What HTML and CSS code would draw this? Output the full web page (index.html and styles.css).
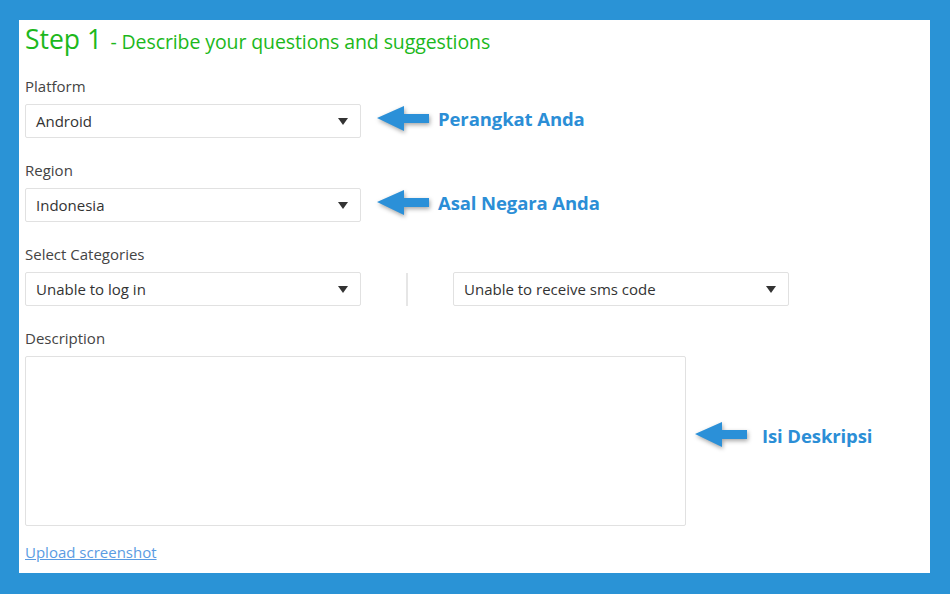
FILE: index.html
```html
<!DOCTYPE html>
<html>
<head>
<meta charset="utf-8">
<link rel="stylesheet" href="styles.css">
</head>
<body>
<div class="frame">
  <div class="panel">
    <h1 class="title"><span class="step">Step 1</span> <span class="sub">- Describe your questions and suggestions</span></h1>

    <div class="field">
      <div class="label">Platform</div>
      <div class="row">
        <div class="select"><span>Android</span><span class="caret"></span></div>
        <div class="note">
          <svg class="arrow" width="58" height="30" viewBox="0 0 58 30"><path d="M2 14 L29 2 L29 10 L54 10 L54 19 L29 19 L29 27 Z" fill="#2b90d8"/></svg>
          <span class="note-text">Perangkat Anda</span>
        </div>
      </div>
    </div>

    <div class="field">
      <div class="label">Region</div>
      <div class="row">
        <div class="select"><span>Indonesia</span><span class="caret"></span></div>
        <div class="note">
          <svg class="arrow" width="58" height="30" viewBox="0 0 58 30"><path d="M2 14 L29 2 L29 10 L54 10 L54 19 L29 19 L29 27 Z" fill="#2b90d8"/></svg>
          <span class="note-text">Asal Negara Anda</span>
        </div>
      </div>
    </div>

    <div class="field">
      <div class="label">Select Categories</div>
      <div class="row">
        <div class="select"><span>Unable to log in</span><span class="caret"></span></div>
        <div class="divider"></div>
        <div class="select"><span>Unable to receive sms code</span><span class="caret"></span></div>
      </div>
    </div>

    <div class="field">
      <div class="label">Description</div>
      <div class="row desc-row">
        <div class="textarea"></div>
        <div class="note note-desc">
          <svg class="arrow" width="58" height="30" viewBox="0 0 58 30"><path d="M2 14 L29 2 L29 10 L54 10 L54 19 L29 19 L29 27 Z" fill="#2b90d8"/></svg>
          <span class="note-text">Isi Deskripsi</span>
        </div>
      </div>
    </div>

    <a class="upload" href="#">Upload screenshot</a>
  </div>
</div>
</body>
</html>
```

FILE: styles.css
```css
html, body {
  margin: 0;
  padding: 0;
}
body {
  background: #2a93d6;
  font-family: "Open Sans", "Noto Sans", sans-serif;
}
.frame {
  width: 950px;
  height: 594px;
  box-sizing: border-box;
  padding: 20px 20px 21px 19px;
}
.panel {
  background: #fff;
  height: 100%;
  box-sizing: border-box;
  padding: 0 6px;
  display: flex;
  flex-direction: column;
}
.title {
  margin: 0;
  padding-top: 0;
  height: 37px;
  line-height: 34px;
  font-weight: normal;
  color: #1cb81c;
  white-space: nowrap;
}
.step {
  font-size: 26.5px;
}
.sub {
  font-size: 19.5px;
  letter-spacing: -0.1px;
}
.field {
  display: flex;
  flex-direction: column;
  margin-top: 19px;
}
.field + .field {
  margin-top: 22px;
}
.label {
  font-size: 15px;
  line-height: 20px;
  height: 20px;
  color: #444;
  margin-bottom: 8px;
}
.row {
  display: flex;
  align-items: center;
}
.select {
  width: 336px;
  height: 34px;
  flex: none;
  box-sizing: border-box;
  border: 1px solid #e1e1e1;
  border-radius: 2px;
  display: flex;
  align-items: center;
  justify-content: space-between;
  padding: 0 11px 0 10px;
  font-size: 15px;
  color: #333;
}
.caret {
  width: 0;
  height: 0;
  border-left: 5px solid transparent;
  border-right: 5px solid transparent;
  border-top: 7px solid #333;
  margin-right: 1px;
}
.divider {
  width: 2px;
  height: 33px;
  background: #e6e6e6;
  margin: 0 45px 0 45px;
}
.note {
  display: flex;
  align-items: center;
  margin-left: 14px;
  margin-top: -5px;
}
.arrow {
  filter: drop-shadow(1px 2px 2px rgba(0, 0, 0, 0.35));
}
.note-text {
  margin-left: 5px;
  font-weight: bold;
  font-size: 18.5px;
  color: #2b8ed6;
  letter-spacing: -0.1px;
}
.desc-row {
  align-items: center;
}
.textarea {
  width: 661px;
  height: 170px;
  flex: none;
  box-sizing: border-box;
  border: 1px solid #e1e1e1;
  border-radius: 2px;
}
.note-desc {
  margin-left: 7px;
  margin-top: -12px;
}
.note-desc .note-text {
  margin-left: 11px;
}
.upload {
  margin-top: 16px;
  align-self: flex-start;
  font-size: 15px;
  line-height: 20px;
  color: #5a9be2;
  text-decoration: underline;
}
```
